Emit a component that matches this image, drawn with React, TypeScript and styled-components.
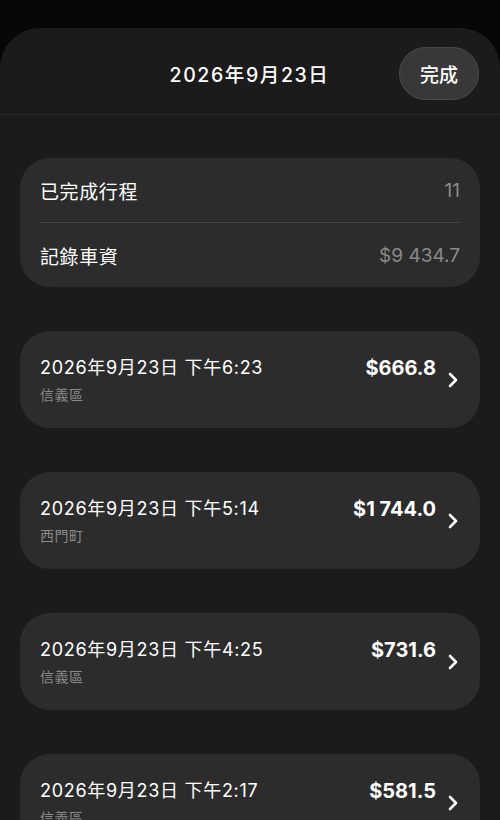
import styled, { createGlobalStyle } from "styled-components";

const GlobalStyle = createGlobalStyle`
  html, body {
    margin: 0;
    padding: 0;
    background: #050805;
  }
  body {
    font-family: Inter, "Noto Sans CJK TC", "Noto Sans", sans-serif;
    color: #ffffff;
    -webkit-font-smoothing: antialiased;
  }
`;

const Screen = styled.div`
  width: 500px;
  height: 820px;
  overflow: hidden;
  background: #050805;
  padding-top: 28px;
  box-sizing: border-box;
`;

const Sheet = styled.div`
  background: #1b1b1b;
  border-radius: 40px 40px 0 0;
  min-height: 100%;
  display: flex;
  flex-direction: column;
`;

const Header = styled.header`
  flex-shrink: 0;
  height: 87px;
  display: grid;
  grid-template-columns: 1fr auto 1fr;
  align-items: center;
  padding: 5px 21px 0 20px;
  border-bottom: 1px solid #2a2a2a;
  box-sizing: border-box;
`;

const Title = styled.h1`
  grid-column: 2;
  margin: 0;
  font-size: 19.5px;
  font-weight: 500;
  letter-spacing: 1.6px;
`;

const DoneButton = styled.button`
  justify-self: end;
  width: 80px;
  height: 53px;
  border-radius: 27px;
  border: 1px solid #4a4a4a;
  background: #383838;
  color: #ffffff;
  font-family: inherit;
  font-size: 19px;
  font-weight: 500;
  margin-top: -1px;
`;

const Content = styled.main`
  flex-shrink: 0;
  display: flex;
  flex-direction: column;
  gap: 44px;
  padding: 43px 20px 0;
`;

const SummaryCard = styled.section`
  background: #2c2c2c;
  border-radius: 30px;
  padding: 0 20px;
`;

const SummaryRow = styled.div<{ $divider?: boolean }>`
  height: 64px;
  display: flex;
  align-items: center;
  justify-content: space-between;
  font-size: 19px;
  letter-spacing: 0.6px;
  border-bottom: ${(p) => (p.$divider ? "1px solid #444444" : "none")};
`;

const SummaryValue = styled.span`
  color: #8a8a8a;
  letter-spacing: 0;
`;

const TripCard = styled.article`
  background: #2c2c2c;
  border-radius: 30px;
  height: 97px;
  padding: 0 20px;
  display: flex;
  align-items: center;
  gap: 10px;
  box-sizing: border-box;
`;

const TripInfo = styled.div`
  flex: 1;
  display: grid;
  grid-template-columns: 1fr auto;
  row-gap: 5px;
  margin-top: 2px;
`;

const TripDate = styled.span`
  font-size: 18px;
  line-height: 24px;
  letter-spacing: 0.7px;
`;

const TripAmount = styled.span`
  font-size: 20px;
  font-weight: 700;
  line-height: 24px;
  text-align: right;
`;

const TripArea = styled.span`
  grid-column: 1 / 3;
  font-size: 14px;
  line-height: 20px;
  color: #8a8a8a;
  letter-spacing: 0.5px;
`;

const Chevron = () => (
  <svg width="14" height="18" viewBox="0 0 14 18" fill="none">
    <path
      d="M4 3 L10 9 L4 15"
      stroke="#ffffff"
      strokeWidth="2.6"
      strokeLinecap="round"
      strokeLinejoin="round"
    />
  </svg>
);

const trips = [
  { time: "2026年9月23日 下午6:23", area: "信義區", amount: "$666.8" },
  { time: "2026年9月23日 下午5:14", area: "西門町", amount: "$1 744.0" },
  { time: "2026年9月23日 下午4:25", area: "信義區", amount: "$731.6" },
  { time: "2026年9月23日 下午2:17", area: "信義區", amount: "$581.5" },
];

export default function App() {
  return (
    <>
      <GlobalStyle />
      <Screen>
        <Sheet>
          <Header>
            <Title>2026年9月23日</Title>
            <DoneButton>完成</DoneButton>
          </Header>
          <Content>
            <SummaryCard>
              <SummaryRow $divider>
                <span>已完成行程</span>
                <SummaryValue>11</SummaryValue>
              </SummaryRow>
              <SummaryRow>
                <span>記錄車資</span>
                <SummaryValue>$9 434.7</SummaryValue>
              </SummaryRow>
            </SummaryCard>
            {trips.map((trip) => (
              <TripCard key={trip.time}>
                <TripInfo>
                  <TripDate>{trip.time}</TripDate>
                  <TripAmount>{trip.amount}</TripAmount>
                  <TripArea>{trip.area}</TripArea>
                </TripInfo>
                <Chevron />
              </TripCard>
            ))}
          </Content>
        </Sheet>
      </Screen>
    </>
  );
}
